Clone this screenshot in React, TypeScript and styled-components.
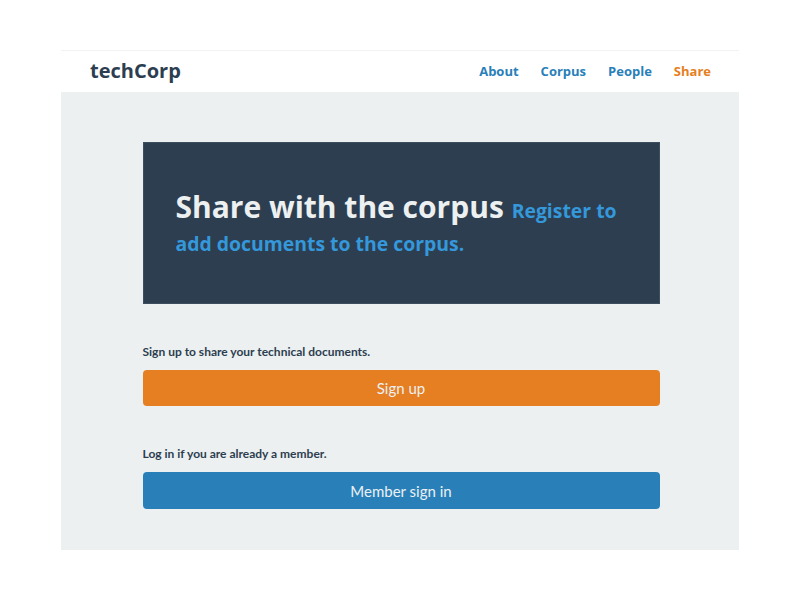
import React from "react";
import styled, { createGlobalStyle } from "styled-components";

const Global = createGlobalStyle`
  html, body { margin: 0; padding: 0; background: #ffffff; }
  body { font-family: "Lato", "Open Sans", sans-serif; }
  * { box-sizing: border-box; }
`;

const Page = styled.div`
  width: 678px;
  margin: 50px auto 0;
  border-top: 1px solid #f1f2f3;
`;

const Header = styled.header`
  height: 41px;
  display: flex;
  align-items: center;
  justify-content: space-between;
  padding: 0 28px 2px 29px;
  background: #ffffff;
`;

const Brand = styled.a`
  font-family: "Open Sans", sans-serif;
  font-weight: 700;
  font-size: 20px;
  color: #2c3e50;
  text-decoration: none;
`;

const Nav = styled.nav`
  display: flex;
  gap: 22px;
`;

const NavLink = styled.a<{ $active?: boolean }>`
  font-family: "Open Sans", sans-serif;
  font-weight: 700;
  font-size: 13px;
  color: ${(p) => (p.$active ? "#e67e22" : "#2980b9")};
  text-decoration: none;
`;

const Main = styled.main`
  background: #ecf0f1;
  padding: 50px 0 41px;
`;

const Inner = styled.div`
  width: 517px;
  margin: 0 auto;
  transform: translateX(1px);
`;

const Hero = styled.section`
  background: #2c3e50;
  padding: 47px 32px;
  border: 1px solid #3d4e60;
`;

const HeroTitle = styled.h1`
  margin: 0;
  font-family: "Open Sans", sans-serif;
  font-weight: 700;
  font-size: 30px;
  line-height: 33px;
  color: #ecf0f1;
`;

const HeroSub = styled.small`
  font-size: 19.4px;
  line-height: 1;
  color: #3498db;
`;

const Block = styled.div<{ $top: number }>`
  margin-top: ${(p) => p.$top}px;
`;

const Label = styled.p`
  margin: 0 0 9px;
  font-family: "Lato", sans-serif;
  font-weight: 700;
  font-size: 12px;
  line-height: 18px;
  color: #2c3e50;
`;

const Button = styled.button<{ $color: string; $h: number }>`
  display: block;
  width: 100%;
  height: ${(p) => p.$h}px;
  border: none;
  border-radius: 4px;
  background: ${(p) => p.$color};
  color: #ecf0f1;
  font-family: "Lato", sans-serif;
  font-size: 15px;
  cursor: pointer;
`;

export default function App() {
  return (
    <>
      <Global />
      <Page>
        <Header>
          <Brand href="#">techCorp</Brand>
          <Nav>
            <NavLink href="#">About</NavLink>
            <NavLink href="#">Corpus</NavLink>
            <NavLink href="#">People</NavLink>
            <NavLink href="#" $active>Share</NavLink>
          </Nav>
        </Header>
        <Main>
          <Inner>
            <Hero>
              <HeroTitle>
                Share with the corpus <HeroSub>Register to add documents to the corpus.</HeroSub>
              </HeroTitle>
            </Hero>
            <Block $top={39}>
              <Label>Sign up to share your technical documents.</Label>
              <Button $color="#e67e22" $h={36}>Sign up</Button>
            </Block>
            <Block $top={39}>
              <Label>Log in if you are already a member.</Label>
              <Button $color="#2980b9" $h={37}>Member sign in</Button>
            </Block>
          </Inner>
        </Main>
      </Page>
    </>
  );
}
